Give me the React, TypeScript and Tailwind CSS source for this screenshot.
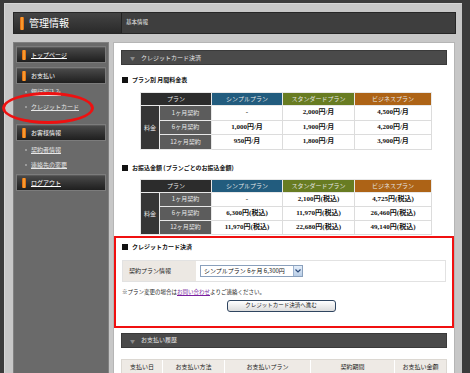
import React from "react";

const jp = { fontFamily: '"Noto Sans CJK JP", "Noto Sans", sans-serif' };
const num = { fontFamily: '"Liberation Serif", "Noto Sans CJK JP", serif' };

function OrangeMark({ h = 10 }: { h?: number }) {
  return (
    <span
      className="inline-block w-[4px] shrink-0 rounded-[1px] bg-gradient-to-r from-[#d85a00] via-[#ffae3a] to-[#d85a00]"
      style={{ height: h }}
    />
  );
}

function SideButton({ label, underline }: { label: string; underline?: boolean }) {
  return (
    <div className="h-[17px] flex items-center gap-[5px] pl-[5px] border border-[#7c7c7c] bg-gradient-to-b from-[#4c4c4c] to-[#1f1f1f] shadow-[inset_0_1px_0_#5a5a5a]">
      <OrangeMark h={10} />
      <span className={`text-[6px] leading-none text-white ${underline ? "underline" : ""}`}>{label}</span>
    </div>
  );
}

function SideLink({ label }: { label: string }) {
  return (
    <div className="h-[15px] flex items-center pl-[9px] gap-[4px]">
      <span className="w-[2px] h-[2px] bg-[#9a9a9a]" />
      <span className="text-[6px] leading-none text-[#e8e8e8] underline">{label}</span>
    </div>
  );
}

function SectionBar({ label }: { label: string }) {
  return (
    <div className="h-[15px] bg-[#4a4a4a] border border-[#3a3a3a] flex items-center pl-[8px] gap-[6px]">
      <span className="text-[5px] text-[#8a8a8a] leading-none">▼</span>
      <span className="text-[6px] text-[#e6e6e6] leading-none">{label}</span>
    </div>
  );
}

function Heading({ label }: { label: string }) {
  return (
    <div className="flex items-center gap-[4px] text-[6px] font-bold text-[#111] leading-none">
      <span className="w-[6px] h-[6px] bg-[#111]" />
      <span>{label}</span>
    </div>
  );
}

type Row = [string, string, string, string];

function PriceTable({ rows, rowH }: { rows: Row[]; rowH: number }) {
  const hd = "h-[13px] text-[6px] text-[#e6e6e6] font-normal text-center border border-[#e8e8e8] leading-none";
  return (
    <table className="border-collapse table-fixed w-[291px]" style={jp}>
      <colgroup>
        <col className="w-[19px]" />
        <col className="w-[52px]" />
        <col className="w-[71px]" />
        <col className="w-[72px]" />
        <col className="w-[77px]" />
      </colgroup>
      <thead>
        <tr>
          <th colSpan={2} className={`${hd} bg-[#2c2c2c]`}>プラン</th>
          <th className={`${hd} bg-[#225c7e]`}>シンプルプラン</th>
          <th className={`${hd} bg-[#687c22]`}>スタンダードプラン</th>
          <th className={`${hd} bg-[#ad6316]`}>ビジネスプラン</th>
        </tr>
      </thead>
      <tbody>
        {rows.map((r, i) => (
          <tr key={i} style={{ height: rowH }}>
            {i === 0 && (
              <td rowSpan={rows.length} className="bg-[#353535] text-[6px] text-[#e6e6e6] text-center border border-[#e8e8e8]">
                料金
              </td>
            )}
            <td className="bg-[#5c5c5c] text-[6px] text-[#e8e8e8] text-center border border-[#e8e8e8] leading-none">{r[0]}</td>
            {r.slice(1).map((c, j) => (
              <td key={j} className="bg-white text-[7px] font-bold text-[#111] text-center border border-[#dcdcdc] leading-none" style={num}>
                {c}
              </td>
            ))}
          </tr>
        ))}
      </tbody>
    </table>
  );
}

export default function App() {
  const t1: Row[] = [
    ["1ヶ月契約", "-", "2,000円/月", "4,500円/月"],
    ["6ヶ月契約", "1,000円/月", "1,900円/月", "4,200円/月"],
    ["12ヶ月契約", "950円/月", "1,800円/月", "3,900円/月"],
  ];
  const t2: Row[] = [
    ["1ヶ月契約", "-", "2,100円(税込)", "4,725円(税込)"],
    ["6ヶ月契約", "6,300円(税込)", "11,970円(税込)", "26,460円(税込)"],
    ["12ヶ月契約", "11,970円(税込)", "22,680円(税込)", "49,140円(税込)"],
  ];
  return (
    <div className="relative w-[470px] h-[373px] overflow-hidden bg-[#3b3b3b] pl-[4px] pt-[3px] pr-[8px]" style={jp}>
      <div className="h-[400px] bg-[#c7c7c7] pl-[8px] pr-[6px] pt-[8px] border-l border-t border-[#d6d6d6]">
        {/* header */}
        <div className="h-[22px] flex border border-[#262626] bg-[#3e3e3e]">
          <div className="w-[108px] flex items-center gap-[5px] pl-[6px] bg-gradient-to-b from-[#444] to-[#2a2a2a] border-r border-[#222]">
            <OrangeMark h={13} />
            <span className="text-[10px] text-white leading-none">管理情報</span>
          </div>
          <div className="flex items-center pl-[4px]">
            <span className="text-[5.5px] text-[#e8e8e8] leading-none">基本情報</span>
          </div>
        </div>

        <div className="flex gap-[4px] mt-[8px]">
          {/* sidebar */}
          <div className="w-[96px] h-[340px] bg-[#6a6a6a] border border-[#808080] px-[2px] pt-[3px] flex flex-col">
            <SideButton label="トップページ" underline />
            <div className="mt-[4px]">
              <SideButton label="お支払い" />
            </div>
            <div className="mt-[0px]">
              <SideLink label="銀行振込み" />
              <SideLink label="クレジットカード" />
            </div>
            <div className="mt-[10px]">
              <SideButton label="お客様情報" />
            </div>
            <div className="mt-[1px]">
              <SideLink label="契約者情報" />
              <SideLink label="連絡先の変更" />
            </div>
            <div className="mt-[2px]">
              <SideButton label="ログアウト" underline />
            </div>
          </div>

          {/* content */}
          <div className="w-[342px] h-[340px] bg-white border border-[#b5b5b5] pt-[7px]">
            <div className="mx-[7px]">
              <SectionBar label="クレジットカード決済" />
            </div>
            <div className="mx-[8px] mt-[12px]">
              <Heading label="プラン別 月間料金表" />
            </div>
            <div className="ml-[26px] mt-[9px]">
              <PriceTable rows={t1} rowH={14.5} />
            </div>
            <div className="mx-[8px] mt-[15px]">
              <Heading label="お振込金額 (プランごとのお振込金額)" />
            </div>
            <div className="ml-[26px] mt-[8px] h-[57px] overflow-hidden">
              <PriceTable rows={t2} rowH={14} />
            </div>

            {/* red box */}
            <div className="mx-[0px] border-2 border-[#f01010] px-[6px] pt-[6px] h-[92px]">
              <Heading label="クレジットカード決済" />
              <div className="mt-[10px] h-[22px] flex border border-[#e2e2e2]">
                <div className="w-[73px] bg-[#ece8e3] flex items-center pl-[6px] text-[6px] text-[#222]">契約プラン情報</div>
                <div className="flex-1 flex items-center pl-[4px]">
                  <div className="w-[103px] h-[12px] border border-[#8aa0bc] bg-white flex items-center">
                    <span className="flex-1 pl-[3px] text-[6px] text-[#111] leading-none whitespace-nowrap">シンプルプラン 6ヶ月 6,300円</span>
                    <span className="w-[9px] h-[10px] bg-gradient-to-b from-[#e4eefa] to-[#b8cde6] border-l border-[#9db3d0] flex items-center justify-center">
                      <svg width="6" height="4" viewBox="0 0 6 4">
                        <path d="M0.5 0.5 L3 3 L5.5 0.5" stroke="#2b4a7a" strokeWidth="1.2" fill="none" />
                      </svg>
                    </span>
                  </div>
                </div>
              </div>
              <div className="mt-[6px] text-[5.5px] text-[#222] leading-[8px]">
                ※プラン変更の場合は<span className="text-[#7a1fa0] underline">お問い合わせ</span>よりご連絡ください。
              </div>
              <div className="flex justify-center mt-[4px] pr-[6px]">
                <div className="w-[109px] h-[12px] rounded-[3px] border border-[#2f4560] bg-gradient-to-b from-white to-[#dcdcdc] flex items-center justify-center text-[5.5px] text-[#111] leading-none">
                  クレジットカード決済へ進む
                </div>
              </div>
            </div>

            <div className="mx-[7px] mt-[5px]">
              <SectionBar label="お支払い履歴" />
            </div>
            <div className="mx-[7px] mt-[11px] h-[16px] flex bg-[#eeeae5] border border-[#dcd8d2] text-[6px] text-[#222]">
              <div className="w-[41px] flex items-center justify-center border-r border-[#fff]">支払い日</div>
              <div className="w-[62px] flex items-center justify-center border-r border-[#fff]">お支払い方法</div>
              <div className="w-[86px] flex items-center justify-center border-r border-[#fff]">お支払いプラン</div>
              <div className="w-[84px] flex items-center justify-center border-r border-[#fff]">契約期間</div>
              <div className="flex-1 flex items-center justify-center">お支払い金額</div>
            </div>
          </div>
        </div>
      </div>

      {/* red ellipse annotation */}
      <div className="absolute left-[2px] top-[92px] w-[92px] h-[32px] rounded-[50%] border-[3px] border-[#ee1111]" />
    </div>
  );
}
